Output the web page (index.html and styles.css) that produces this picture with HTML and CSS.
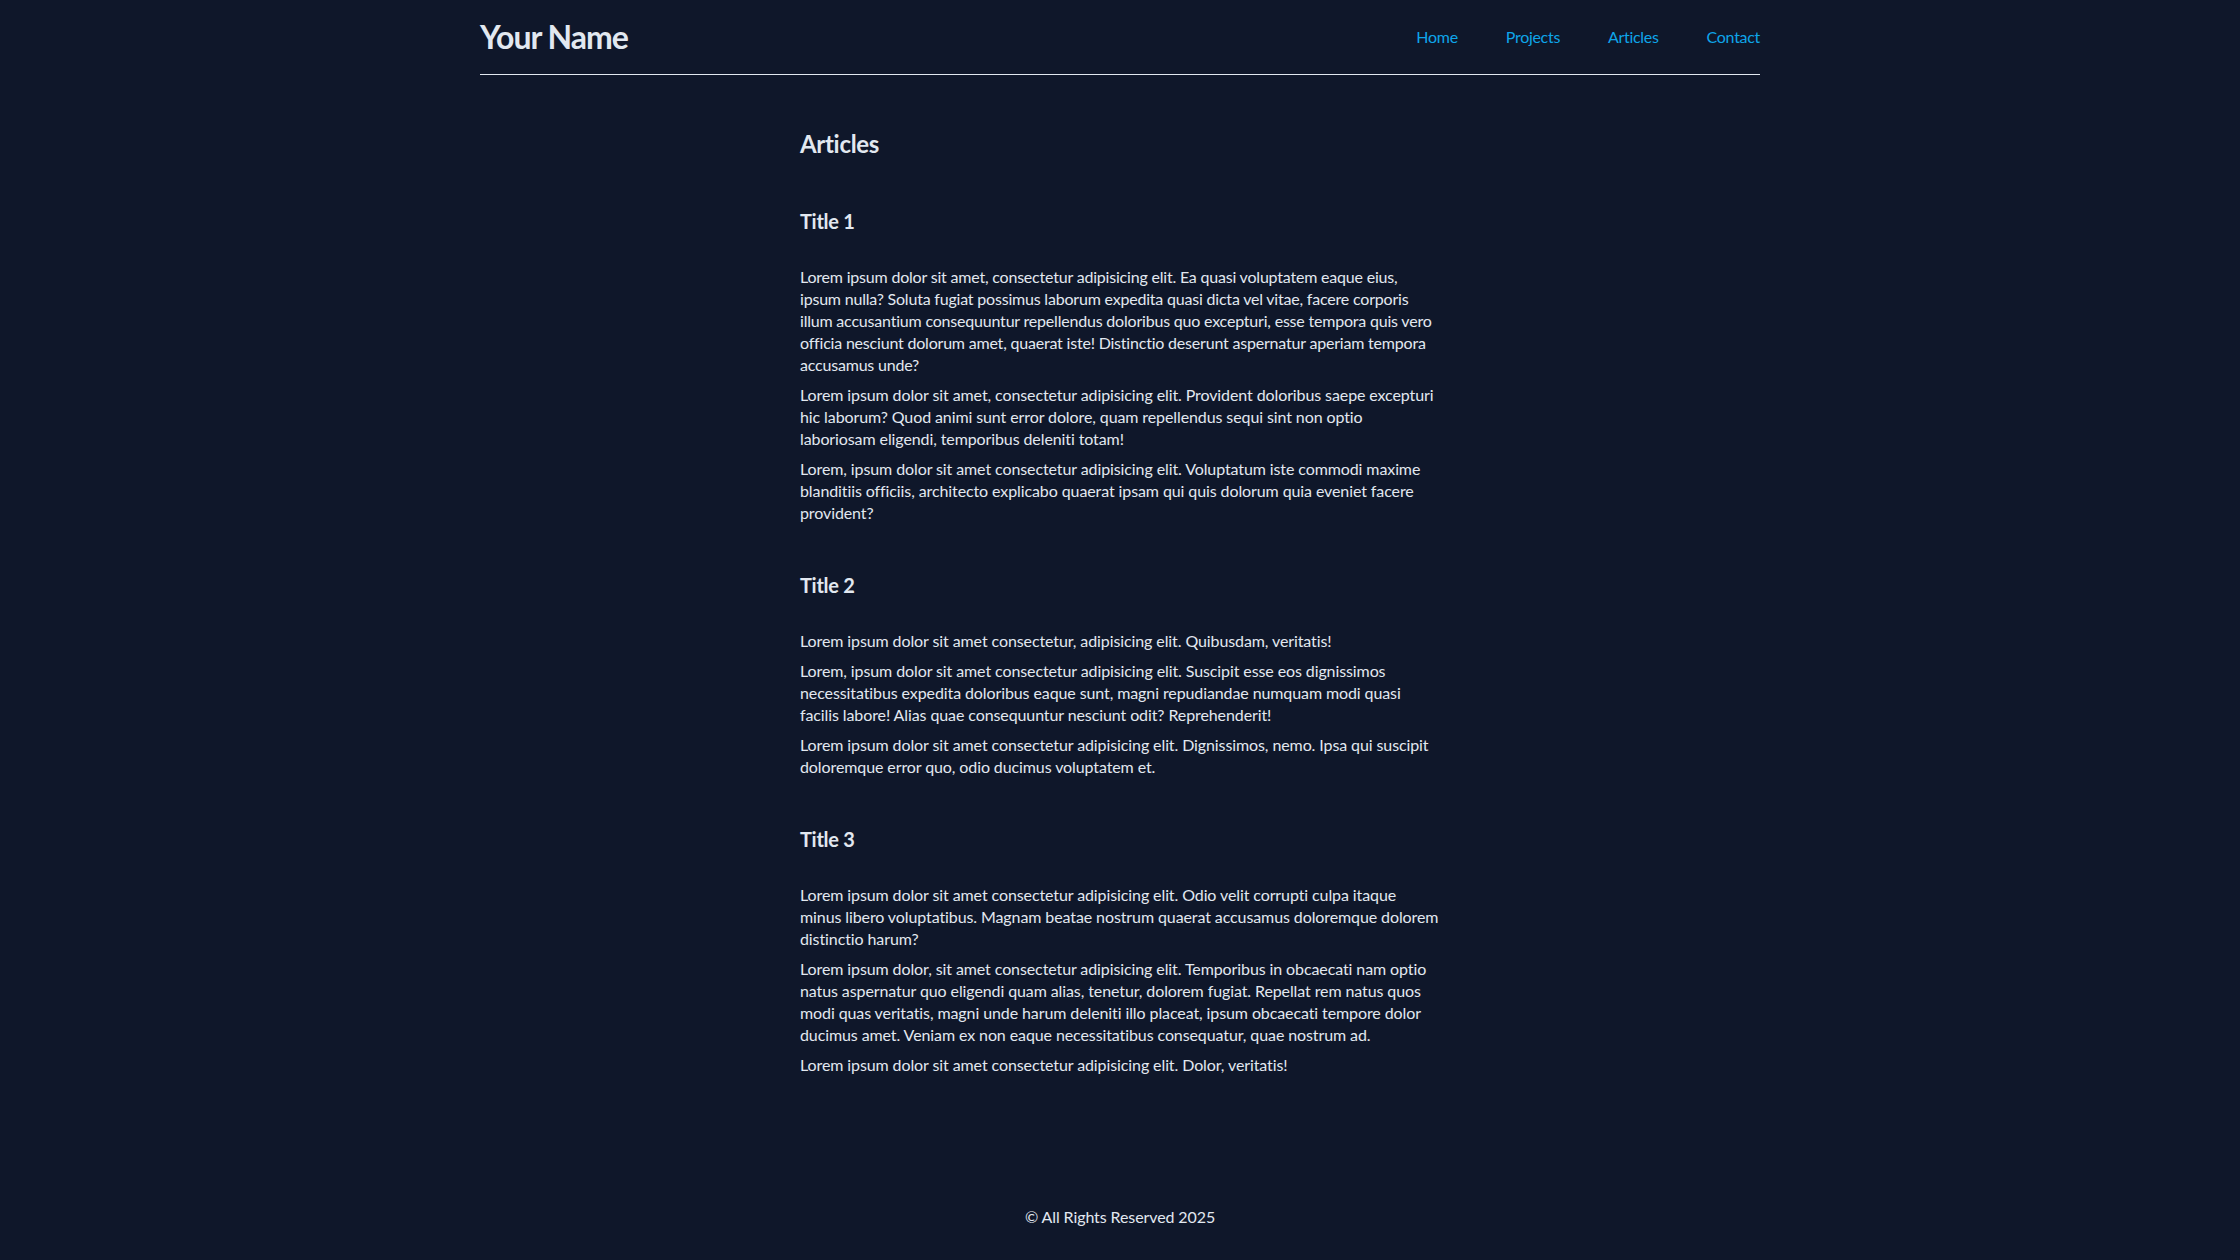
FILE: index.html
```html
<!DOCTYPE html>
<html lang="en">
<head>
<meta charset="utf-8">
<title>Articles</title>
<link rel="stylesheet" href="styles.css">
</head>
<body>
<header class="site-header">
  <a class="brand" href="#">Your Name</a>
  <nav class="nav">
    <a href="#">Home</a>
    <a href="#">Projects</a>
    <a href="#">Articles</a>
    <a href="#">Contact</a>
  </nav>
</header>
<main class="content">
  <h1 class="page-title">Articles</h1>
  <article class="post">
    <h2 class="post-title">Title 1</h2>
    <p class="tight">Lorem ipsum dolor sit amet, consectetur adipisicing elit. Ea quasi voluptatem eaque eius, ipsum nulla? Soluta fugiat possimus laborum expedita quasi dicta vel vitae, facere corporis illum accusantium consequuntur repellendus doloribus quo excepturi, esse tempora quis vero officia nesciunt dolorum amet, quaerat iste! Distinctio deserunt aspernatur aperiam tempora accusamus unde?</p>
    <p>Lorem ipsum dolor sit amet, consectetur adipisicing elit. Provident doloribus saepe excepturi hic laborum? Quod animi sunt error dolore, quam repellendus sequi sint non optio laboriosam eligendi, temporibus deleniti totam!</p>
    <p>Lorem, ipsum dolor sit amet consectetur adipisicing elit. Voluptatum iste commodi maxime blanditiis officiis, architecto explicabo quaerat ipsam qui quis dolorum quia eveniet facere provident?</p>
  </article>
  <article class="post">
    <h2 class="post-title">Title 2</h2>
    <p>Lorem ipsum dolor sit amet consectetur, adipisicing elit. Quibusdam, veritatis!</p>
    <p>Lorem, ipsum dolor sit amet consectetur adipisicing elit. Suscipit esse eos dignissimos necessitatibus expedita doloribus eaque sunt, magni repudiandae numquam modi quasi facilis labore! Alias quae consequuntur nesciunt odit? Reprehenderit!</p>
    <p>Lorem ipsum dolor sit amet consectetur adipisicing elit. Dignissimos, nemo. Ipsa qui suscipit doloremque error quo, odio ducimus voluptatem et.</p>
  </article>
  <article class="post">
    <h2 class="post-title">Title 3</h2>
    <p>Lorem ipsum dolor sit amet consectetur adipisicing elit. Odio velit corrupti culpa itaque minus libero voluptatibus. Magnam beatae nostrum quaerat accusamus doloremque dolorem distinctio harum?</p>
    <p>Lorem ipsum dolor, sit amet consectetur adipisicing elit. Temporibus in obcaecati nam optio natus aspernatur quo eligendi quam alias, tenetur, dolorem fugiat. Repellat rem natus quos modi quas veritatis, magni unde harum deleniti illo placeat, ipsum obcaecati tempore dolor ducimus amet. Veniam ex non eaque necessitatibus consequatur, quae nostrum ad.</p>
    <p>Lorem ipsum dolor sit amet consectetur adipisicing elit. Dolor, veritatis!</p>
  </article>
</main>
<footer class="site-footer">© All Rights Reserved 2025</footer>
</body>
</html>
```

FILE: styles.css
```css
* { box-sizing: border-box; }
html, body { margin: 0; padding: 0; }
body {
  background: #0f172a;
  color: #e2e8f0;
  font-family: Lato, "Noto Sans", sans-serif;
  font-size: 16px;
  line-height: 22px;
  letter-spacing: -0.1px;
  min-height: 100vh;
  display: flex;
  flex-direction: column;
}
a { text-decoration: none; }
.site-header {
  width: 1280px;
  margin: 0 auto;
  height: 75px;
  border-bottom: 1px solid #e2e8f0;
  display: flex;
  align-items: center;
  justify-content: space-between;
}
.brand {
  color: #e2e8f0;
  font-size: 32px;
  font-weight: 700;
  line-height: 40px;
  letter-spacing: -1px;
}
.nav { display: flex; gap: 48px; }
.nav a { color: #0ea5e9; font-size: 16px; line-height: 22px; letter-spacing: -0.3px; }
.content {
  flex: 1;
  width: 640px;
  margin: 0 auto;
  padding-top: 53px;
  padding-bottom: 40px;
}
.page-title {
  margin: 0;
  font-size: 24px;
  line-height: 32px;
  font-weight: 700;
  letter-spacing: -0.3px;
}
.post { margin-top: 47px; }
.post-title {
  margin: 0 0 31px;
  font-size: 20px;
  line-height: 28px;
  font-weight: 700;
  letter-spacing: -0.3px;
}
.post p { margin: 0 0 8px; }
.post p.tight { letter-spacing: -0.2px; }
.post p:last-child { margin-bottom: 0; }
.site-footer {
  text-align: center;
  padding: 16px 0 32px;
  font-size: 16px;
  line-height: 22px;
}
```
